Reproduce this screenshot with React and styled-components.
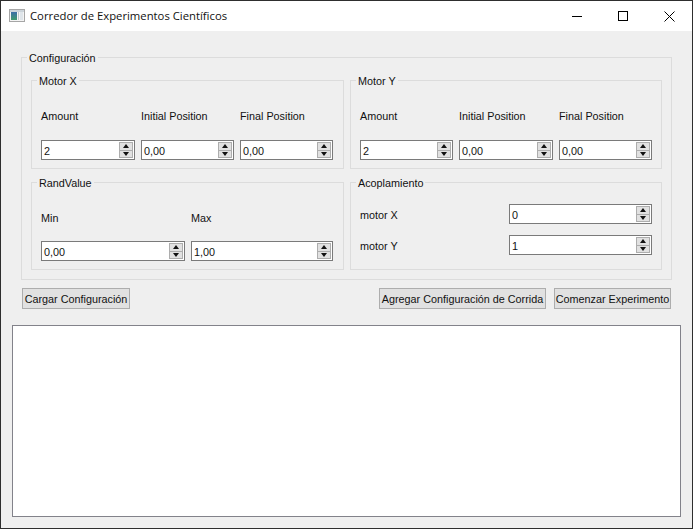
import styled, { createGlobalStyle } from 'styled-components';

const GlobalStyle = createGlobalStyle`
  html, body {
    margin: 0;
    padding: 0;
    background: #efefef;
  }
  * {
    box-sizing: border-box;
  }
`;

const Win = styled.div`
  width: 693px;
  height: 529px;
  display: flex;
  flex-direction: column;
  background: #efefef;
  border: 1px solid #2e2e2e;
  font-family: "Liberation Sans", Arial, sans-serif;
  font-size: 10.8px;
  color: #111;
  overflow: hidden;
`;

const TitleBar = styled.div`
  height: 30px;
  flex: none;
  display: flex;
  align-items: center;
  background: #fff;
  padding-left: 8px;
`;

const AppIcon = styled.svg`
  width: 16px;
  height: 16px;
  flex: none;
`;

const TitleText = styled.span`
  margin: 0 0 2px 5px;
  flex: 1;
  font-family: "Open Sans", "Noto Sans", sans-serif;
  font-size: 11.3px;
`;

const WinBtn = styled.div`
  width: 46px;
  height: 30px;
  display: flex;
  align-items: center;
  justify-content: center;
`;

const Body = styled.div`
  flex: 1;
  display: flex;
  flex-direction: column;
  padding: 0 11px 11px 11px;
`;

const Group = styled.fieldset`
  margin: 0;
  min-width: 0;
  padding: 0;
  border: 1px solid #dcdcdc;
  height: ${(p) => p.$h}px;
`;

const Legend = styled.legend`
  margin-left: 5px;
  padding: 0 2px;
  height: 16px;
  line-height: 18px;
`;

const ConfigGroup = styled(Group)`
  margin: 18px 9px 0 9px;
`;

const GroupGrid = styled.div`
  display: grid;
  grid-template-columns: 313px 312px;
  grid-template-rows: 97px 96px;
  column-gap: 6px;
  row-gap: 5px;
  margin: 7px 9px 0 9px;
`;

const Fields = styled.div`
  display: grid;
  grid-template-columns: ${(p) => p.$cols};
  column-gap: 6px;
  padding: 19px 9px 0 9px;
`;

const FieldLabel = styled.div`
  height: 18px;
  line-height: 18px;
  margin-bottom: ${(p) => p.$mb}px;
`;

const Column = styled.div`
  display: flex;
  flex-direction: column;
`;

const Coupling = styled.div`
  display: flex;
  flex-direction: column;
  gap: 11px;
  padding: 14px 9px 0 9px;
`;

const CouplingRow = styled.div`
  display: flex;
  align-items: center;
  justify-content: space-between;
`;

const CouplingLabel = styled.span`
  padding-top: 2px;
`;

const Spin = styled.div`
  width: ${(p) => (p.$w ? p.$w + 'px' : '100%')};
  height: 20px;
  display: flex;
  align-items: center;
  justify-content: space-between;
  background: #fff;
  border: 1px solid #7a7a7a;
  padding: 0 1px 0 2px;
`;

const SpinValue = styled.span`
  line-height: 18px;
  padding-top: 1px;
`;

const SpinBtns = styled.div`
  width: 14px;
  height: 16px;
  display: flex;
  flex-direction: column;
  flex: none;
`;

const SpinBtn = styled.div`
  flex: 1;
  background: #e1e1e1;
  border: 1px solid #adadad;
  display: flex;
  align-items: center;
  justify-content: center;
  & + & {
    border-top: none;
  }
`;

const Arrow = styled.span`
  width: 0;
  height: 0;
  border-left: 3.5px solid transparent;
  border-right: 3.5px solid transparent;
  ${(p) => (p.$down ? 'border-top: 4px solid #111;' : 'border-bottom: 4px solid #111;')}
`;

const ButtonRow = styled.div`
  display: flex;
  align-items: center;
  margin: 8px 10px 0 10px;
`;

const Spacer = styled.div`
  flex: 1;
`;

const PushButton = styled.div`
  width: ${(p) => p.$w}px;
  height: 21px;
  margin-left: ${(p) => p.$ml || 0}px;
  display: flex;
  align-items: center;
  justify-content: center;
  background: #e1e1e1;
  border: 1px solid #adadad;
  white-space: nowrap;
`;

const TextArea = styled.div`
  flex: 1;
  margin-top: 16px;
  background: #fff;
  border: 1px solid #82828a;
`;

const SpinBox = ({ value, w }) => (
  <Spin $w={w}>
    <SpinValue>{value}</SpinValue>
    <SpinBtns>
      <SpinBtn><Arrow /></SpinBtn>
      <SpinBtn><Arrow $down /></SpinBtn>
    </SpinBtns>
  </Spin>
);

const MotorGroup = ({ title, cols }) => (
  <Group $h={97}>
    <Legend>{title}</Legend>
    <Fields $cols={cols}>
      <Column><FieldLabel $mb={15}>Amount</FieldLabel><SpinBox value="2" /></Column>
      <Column><FieldLabel $mb={15}>Initial Position</FieldLabel><SpinBox value="0,00" /></Column>
      <Column><FieldLabel $mb={15}>Final Position</FieldLabel><SpinBox value="0,00" /></Column>
    </Fields>
  </Group>
);

export default function App() {
  return (
    <>
      <GlobalStyle />
      <Win>
        <TitleBar>
          <AppIcon viewBox="0 0 16 16">
            <defs>
              <linearGradient id="pane" x1="0" y1="0" x2="0" y2="1">
                <stop offset="0" stopColor="#3b6ea8" />
                <stop offset="1" stopColor="#3f9a6c" />
              </linearGradient>
            </defs>
            <rect x="0.5" y="1.5" width="15" height="12" fill="#f4f4f4" stroke="#a6a6a6" />
            <rect x="1" y="2" width="14" height="2" fill="#ccd4da" />
            <rect x="2" y="4" width="6" height="8" fill="url(#pane)" />
            <rect x="9" y="4" width="1" height="8" fill="#bfc8cc" />
            <rect x="11" y="4" width="3" height="8" fill="#dfe5ea" />
          </AppIcon>
          <TitleText>Corredor de Experimentos Científicos</TitleText>
          <WinBtn>
            <svg width="10" height="10" viewBox="0 0 10 10"><path d="M0 5.5H10" stroke="#000" /></svg>
          </WinBtn>
          <WinBtn>
            <svg width="10" height="10" viewBox="0 0 10 10"><rect x="0.5" y="0.5" width="9" height="9" fill="none" stroke="#000" /></svg>
          </WinBtn>
          <WinBtn>
            <svg width="11" height="11" viewBox="0 0 11 11"><path d="M0.5 0.5L10.5 10.5M10.5 0.5L0.5 10.5" stroke="#000" /></svg>
          </WinBtn>
        </TitleBar>
        <Body>
          <ConfigGroup $h={231}>
            <Legend>Configuración</Legend>
            <GroupGrid>
              <MotorGroup title="Motor X" cols="94px 93px 93px" />
              <MotorGroup title="Motor Y" cols="93px 94px 93px" />
              <Group $h={96}>
                <Legend>RandValue</Legend>
                <Fields $cols="144px 142px">
                  <Column><FieldLabel $mb={14}>Min</FieldLabel><SpinBox value="0,00" /></Column>
                  <Column><FieldLabel $mb={14}>Max</FieldLabel><SpinBox value="1,00" /></Column>
                </Fields>
              </Group>
              <Group $h={96}>
                <Legend>Acoplamiento</Legend>
                <Coupling>
                  <CouplingRow><CouplingLabel>motor X</CouplingLabel><SpinBox value="0" w={143} /></CouplingRow>
                  <CouplingRow><CouplingLabel>motor Y</CouplingLabel><SpinBox value="1" w={143} /></CouplingRow>
                </Coupling>
              </Group>
            </GroupGrid>
          </ConfigGroup>
          <ButtonRow>
            <PushButton $w={108}>Cargar Configuración</PushButton>
            <Spacer />
            <PushButton $w={167}>Agregar Configuración de Corrida</PushButton>
            <PushButton $w={117} $ml={8}>Comenzar Experimento</PushButton>
          </ButtonRow>
          <TextArea />
        </Body>
      </Win>
    </>
  );
}
